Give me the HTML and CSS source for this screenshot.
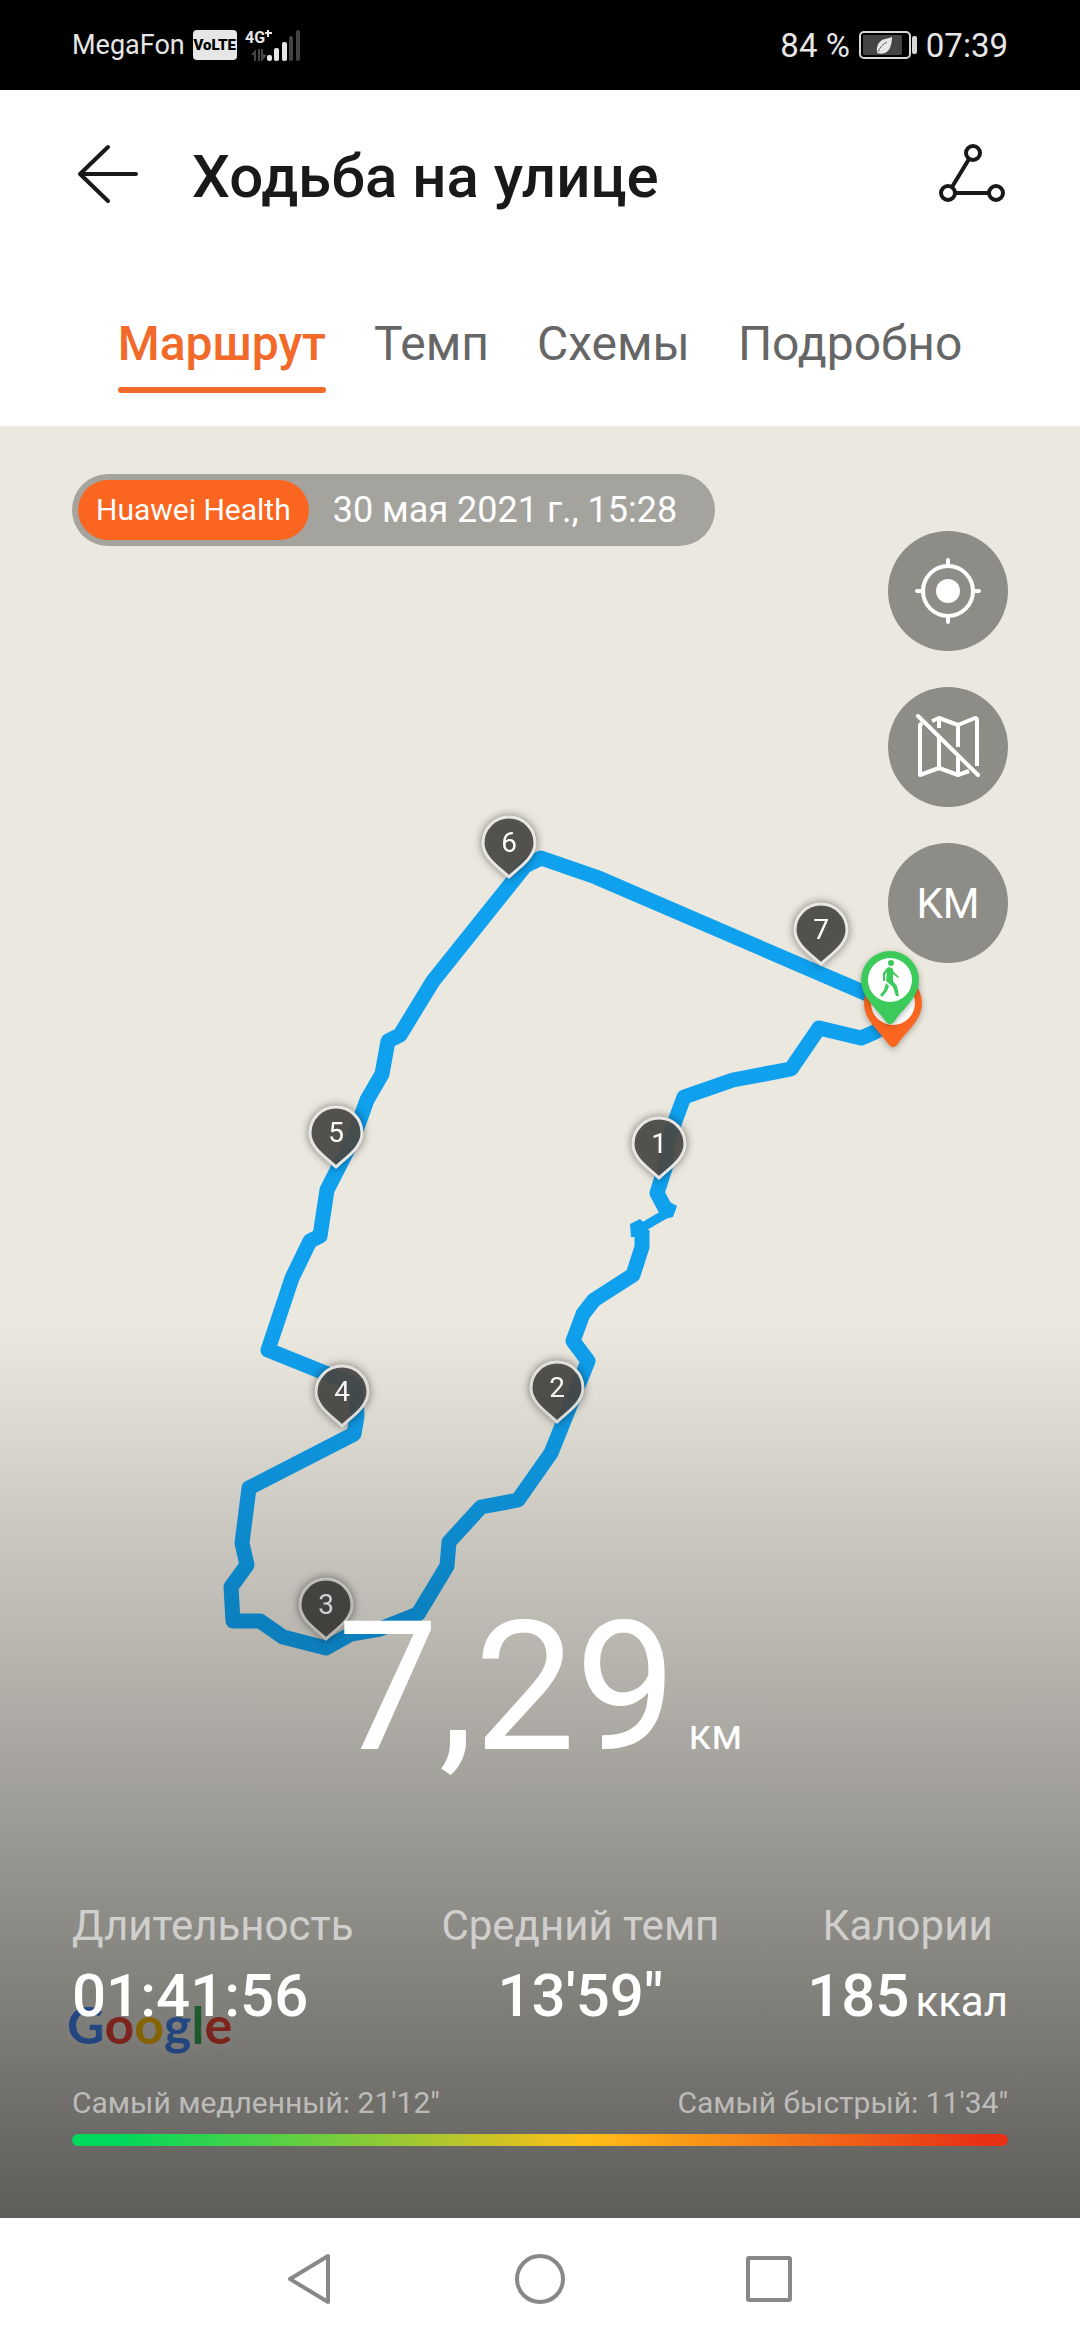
FILE: index.html
```html
<!DOCTYPE html>
<html lang="ru">
<head>
    <meta charset="UTF-8">
    <meta name="viewport" content="width=device-width, initial-scale=1.0">
    <title>Ходьба на улице</title>
    <link rel="stylesheet" href="styles.css">
</head>
<body>
    <div class="status-bar">
        <div class="status-left">
            <span class="carrier">MegaFon</span>
            <span class="volte">VoLTE</span>
            <svg class="signal" width="58" height="32" viewBox="0 0 58 32">
                <text class="net" x="0" y="14">4G</text>
                <path d="M23 1v7M20 4h7" stroke="#e6e6e6" stroke-width="2"/>
                <g fill="#444">
                    <path d="M6 26l5-6v12H9v-6zM13 20h2v12h-2zM16 20h2v5l4 1-5 6h-1z"/>
                    <rect x="44" y="7" width="4" height="25" rx="2"/>
                    <rect x="51" y="1" width="4" height="31" rx="2"/>
                </g>
                <g fill="#e6e6e6">
                    <rect x="22" y="26" width="5" height="6" rx="2"/>
                    <rect x="29" y="19" width="5" height="13" rx="2"/>
                    <rect x="37" y="13" width="5" height="19" rx="2"/>
                </g>
            </svg>
        </div>
        <div class="status-right">
            <span>84 %</span>
            <svg width="58" height="28" viewBox="0 0 58 28">
                <rect x="1" y="1" width="50" height="26" rx="4" fill="none" stroke="#d8d8d8" stroke-width="2"/>
                <rect x="4" y="4" width="39" height="20" rx="1" fill="#444"/>
                <rect x="53" y="5" width="5" height="18" rx="2" fill="#d8d8d8"/>
                <path d="M18 21c-1-7 3-12 8-13 3-1 5-1 7-2 0 7-2 14-7 16-3 1-5 1-6 0l-1 1z" fill="#e6e6e6"/>
                <path d="M19 21c2-5 5-8 9-10" fill="none" stroke="#666" stroke-width="1"/>
            </svg>
            <span>07:39</span>
        </div>
    </div>

    <header class="header">
        <button class="icon-btn" aria-label="Назад">
            <svg width="72" height="72" viewBox="0 0 72 72" fill="none" stroke="#191919" stroke-width="4" stroke-linecap="round" stroke-linejoin="round">
                <path d="M36 6L8 33l28 27M8 33h56"/>
            </svg>
        </button>
        <h1>Ходьба на улице</h1>
        <button class="icon-btn" aria-label="Поделиться">
            <svg width="72" height="72" viewBox="0 0 72 72" fill="none" stroke="#191919" stroke-width="4">
                <circle cx="37" cy="12" r="7"/>
                <circle cx="12" cy="52" r="7"/>
                <circle cx="60" cy="52" r="7"/>
                <path d="M33 18L16 46M19 52h34"/>
            </svg>
        </button>
    </header>

    <nav class="tabs">
        <a href="#route" class="tab active">Маршрут</a>
        <a href="#pace" class="tab">Темп</a>
        <a href="#charts" class="tab">Схемы</a>
        <a href="#details" class="tab">Подробно</a>
    </nav>

    <main class="map" id="route">
        <svg class="map-canvas" viewBox="0 426 1080 1792" preserveAspectRatio="xMidYMid slice">
            <defs>
                <path id="pin" d="M0-1C-9-10-26-20-26-35a26 26 0 0 1 52 0C26-20 9-10 0-1z"/>
                <path id="big-pin" d="M0 0Q-3 0-6-5C-14-16-29-27-29-44a29 29 0 0 1 58 0C29-27 14-16 6-5Q3 0 0 0z"/>
            </defs>

            <!-- track -->
            <g class="track">
                <path d="M893 1020L875 1032 861 1038 819 1028 791 1069 733 1080 684 1097 674 1124 667 1146 666 1165 657 1193 666 1210"/>
                <path d="M642 1230L642 1247 633 1275 594 1300 583 1314 573 1341 588 1361 551 1453 518 1500 481 1507 449 1542 447 1566 418 1614 380 1629 351 1634 326 1648 283 1637 260 1621 233 1621 231 1587 247 1565 242 1543 249 1488 354 1434 357 1416 355 1385 268 1350 292 1278 310 1241 320 1236 327 1190 353 1139 367 1100 382 1074 388 1041 400 1035 433 981 525 866 541 858 596 877 893 1005"/>
                <path class="thin" d="M667 1213L643 1227"/>
            </g>
            <path fill="#0fa0ee" d="M660 1208l8-7 9 5-4 11-13 3zM630 1224l10-5 8 8-6 10-11 0z"/>

            <!-- kilometre marks -->
            <g class="km-pin" transform="translate(659 1179)"><use href="#pin"/><text y="-26">1</text></g>
            <g class="km-pin" transform="translate(557 1423)"><use href="#pin"/><text y="-26">2</text></g>
            <g class="km-pin" transform="translate(326 1640)"><use href="#pin"/><text y="-26">3</text></g>
            <g class="km-pin" transform="translate(342 1427)"><use href="#pin"/><text y="-26">4</text></g>
            <g class="km-pin" transform="translate(336 1168)"><use href="#pin"/><text y="-26">5</text></g>
            <g class="km-pin" transform="translate(509 878)"><use href="#pin"/><text y="-26">6</text></g>
            <g class="km-pin" transform="translate(821 965)"><use href="#pin"/><text y="-26">7</text></g>

            <!-- finish and start -->
            <g class="end-pin" transform="translate(893 1047)">
                <use href="#big-pin" fill="#fa6620"/>
                <circle cy="-44" r="22" fill="#fff"/>
            </g>
            <g class="end-pin" transform="translate(890 1024)">
                <use href="#big-pin" fill="#3ccb5a"/>
                <circle cy="-44" r="22" fill="#fff"/>
                <circle cx="1" cy="-61" r="3" fill="#3ccb5a"/>
                <path d="M-3-56Q0-58 3-55L3-43 7-38 9-28 6-28 3-37-4-43-3-52-5-49-5-43-7-43-7-51zM3-53L9-47 8-46 3-50zM-4-41L-1-38-3-33-8-27-10-29-6-34z" fill="#3ccb5a"/>
            </g>

            <text class="google" x="67" y="2044"><tspan fill="#4285f4">G</tspan><tspan fill="#ea4335">o</tspan><tspan fill="#fbbc05">o</tspan><tspan fill="#4285f4">g</tspan><tspan fill="#34a853">l</tspan><tspan fill="#ea4335">e</tspan></text>
        </svg>

        <div class="map-top">
            <div class="source">
                <span class="source-name">Huawei Health</span>
                <time class="source-date" datetime="2021-05-30T15:28">30 мая 2021 г., 15:28</time>
            </div>
            <div class="map-controls">
                <button class="round-btn" aria-label="Моё местоположение">
                    <svg width="72" height="72" viewBox="0 0 72 72" fill="none" stroke="#fff" stroke-width="4" stroke-linecap="round">
                        <circle cx="36" cy="36" r="25"/>
                        <circle cx="36" cy="36" r="12" fill="#fff" stroke="none"/>
                        <path d="M36 5v6M36 61v6M5 36h6M61 36h6"/>
                    </svg>
                </button>
                <button class="round-btn" aria-label="Скрыть карту">
                    <svg width="72" height="72" viewBox="0 0 72 72" fill="none" stroke="#fff" stroke-width="4" stroke-linecap="round" stroke-linejoin="round">
                        <path d="M10 12L8 14V64L27 57 46 64 57 60M20 10L27 7 46 14 63 7Q65 7 65 10V55M27 8V17M27 25V57M46 14V36M46 46V63" stroke-linecap="butt"/>
                        <path d="M6 5L66 64"/>
                    </svg>
                </button>
                <button class="round-btn">KM</button>
            </div>
        </div>

        <section class="summary">
            <div class="distance">7,29<span class="unit">км</span></div>
            <div class="stats">
                <div class="stat first">
                    <div class="stat-label">Длительность</div>
                    <div class="stat-value">01:41:56</div>
                </div>
                <div class="stat">
                    <div class="stat-label">Средний темп</div>
                    <div class="stat-value">13'59"</div>
                </div>
                <div class="stat">
                    <div class="stat-label">Калории</div>
                    <div class="stat-value">185<span class="unit">ккал</span></div>
                </div>
            </div>
            <div class="pace-labels">
                <span>Самый медленный: 21'12"</span>
                <span>Самый быстрый: 11'34"</span>
            </div>
            <div class="pace-bar"></div>
        </section>
    </main>

    <div class="nav-bar">
        <button class="nav-btn" aria-label="Назад">
            <svg width="54" height="54" viewBox="0 0 54 54"><path d="M44 4V50L6 27z"/></svg>
        </button>
        <button class="nav-btn" aria-label="Домой">
            <svg width="54" height="54" viewBox="0 0 54 54"><circle cx="27" cy="27" r="23"/></svg>
        </button>
        <button class="nav-btn" aria-label="Недавние">
            <svg width="54" height="54" viewBox="0 0 54 54"><rect x="6" y="6" width="42" height="42" rx="1"/></svg>
        </button>
    </div>
</body>
</html>
```
FILE: styles.css
```css
* {
    box-sizing: border-box;
}
body {
    margin: 0;
    min-height: 100vh;
    display: flex;
    flex-direction: column;
    background: #fff;
    color: #191919;
    font-family: Roboto, "Noto Sans", sans-serif;
}
button {
    padding: 0;
    border: none;
    background: none;
    font-family: inherit;
    cursor: pointer;
}
svg {
    display: block;
}

/* status bar */
.status-bar {
    height: 90px;
    padding: 0 72px;
    display: flex;
    align-items: center;
    justify-content: space-between;
    background: #000;
    color: #e6e6e6;
}
.status-left,
.status-right {
    display: flex;
    align-items: center;
}
.status-left {
    gap: 8px;
    font-size: 27px;
}
.status-right {
    gap: 9px;
    font-size: 33px;
}
.volte {
    width: 44px;
    border-radius: 4px;
    background: #e6e6e6;
    color: #000;
    font-size: 15px;
    font-weight: 900;
    line-height: 30px;
    text-align: center;
}
.net {
    fill: #e6e6e6;
    font-size: 16px;
    font-weight: 700;
}

/* header */
.header {
    height: 174px;
    padding: 0 72px;
    display: flex;
    align-items: center;
    gap: 48px;
}
.header h1 {
    flex: 1;
    margin: 0;
    font-size: 60px;
    line-height: 72px;
    font-weight: 500;
}
.tabs {
    padding: 50px 0 33px;
    display: flex;
    justify-content: center;
    gap: 48px;
}
.tab {
    color: #666;
    font-size: 48px;
    line-height: 60px;
    text-decoration: none;
}
.tab::after {
    content: "";
    display: block;
    height: 6px;
    margin-top: 13px;
    border-radius: 3px;
}
.tab.active {
    color: #f26a2a;
    font-weight: 500;
}
.tab.active::after {
    background: #f26a2a;
}

/* map */
.map {
    position: relative;
    flex: 1;
    display: flex;
    flex-direction: column;
    justify-content: space-between;
    background: #ebe8df;
}
.map-canvas {
    position: absolute;
    top: 0;
    left: 0;
    width: 100%;
    height: 100%;
}
.track {
    fill: none;
    stroke: #0fa0ee;
    stroke-width: 15px;
    stroke-linejoin: round;
}
.track .thin {
    stroke-width: 9px;
}
.km-pin {
    filter: drop-shadow(0 0 4px rgba(0, 0, 0, 0.5));
}
.km-pin use {
    fill: rgba(78, 75, 72, 0.9);
    stroke: #e8e7e4;
    stroke-width: 3px;
}
.km-pin text {
    fill: #fff;
    font-size: 28px;
    text-anchor: middle;
}
.end-pin {
    filter: drop-shadow(0 2px 3px rgba(0, 0, 0, 0.3));
}
.google {
    font-family: Lato, sans-serif;
    font-size: 52px;
    font-weight: 700;
    paint-order: stroke;
    stroke: rgba(255, 255, 255, 0.15);
    stroke-width: 12px;
    stroke-linejoin: round;
}
.map-top {
    position: relative;
    padding: 48px 72px 0;
    display: flex;
    align-items: flex-start;
    justify-content: space-between;
}
.source {
    padding: 6px;
    display: flex;
    align-items: center;
    border-radius: 36px;
    background: #a4a39d;
    color: #fff;
}
.source-name {
    padding: 0 18px;
    border-radius: 30px;
    background: #fa6620;
    font-size: 30px;
    line-height: 60px;
}
.source-date {
    padding: 0 32px 0 24px;
    font-size: 36px;
}
.map-controls {
    margin-top: 57px;
    display: flex;
    flex-direction: column;
    gap: 36px;
}
.round-btn {
    width: 120px;
    height: 120px;
    display: flex;
    align-items: center;
    justify-content: center;
    border-radius: 50%;
    background: #8d8c87;
    color: #fff;
    font-size: 42px;
}

/* summary */
.summary {
    position: relative;
    padding: 274px 72px 72px;
    background: linear-gradient(rgba(0, 0, 0, 0), rgba(0, 0, 0, 0.6));
    color: #fff;
}
.distance {
    font-size: 180px;
    line-height: 180px;
    text-align: center;
}
.unit {
    font-size: 42px;
    line-height: 42px;
    font-weight: 400;
}
.distance .unit {
    margin-left: 12px;
}
.stats {
    margin-top: 124px;
    display: flex;
    justify-content: space-between;
    text-align: center;
}
.stat.first {
    text-align: left;
}
.stat-label {
    color: rgba(255, 255, 255, 0.6);
    font-size: 42px;
    line-height: 48px;
}
.stat-value {
    margin-top: 10px;
    font-size: 60px;
    line-height: 72px;
    font-weight: 500;
}
.stat-value .unit {
    margin-left: 6px;
}
.pace-labels {
    margin-top: 53px;
    display: flex;
    justify-content: space-between;
    color: rgba(255, 255, 255, 0.55);
    font-size: 30px;
    line-height: 36px;
}
.pace-bar {
    height: 12px;
    margin-top: 13px;
    border-radius: 6px;
    background: linear-gradient(90deg, #00d85c 5%, #ffbe19 55%, #e83017 97%);
}

/* navigation bar */
.nav-bar {
    height: 122px;
    display: flex;
    align-items: center;
    justify-content: center;
    gap: 175px;
}
.nav-btn svg {
    fill: none;
    stroke: #888886;
    stroke-width: 4px;
    stroke-linejoin: round;
}
```
